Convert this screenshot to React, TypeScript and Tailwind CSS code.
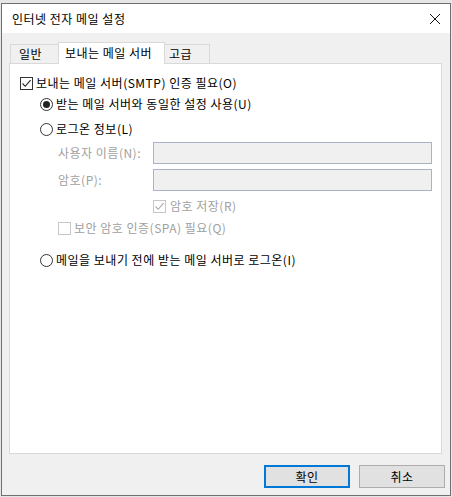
import React from "react";

const font = { fontFamily: '"Noto Sans CJK KR", "Noto Sans", sans-serif' };

function Check({ disabled }: { disabled?: boolean }) {
  return (
    <span className={`w-[13px] h-[13px] border shrink-0 flex items-center justify-center bg-white ${disabled ? "border-[#c6c6c6]" : "border-[#333333]"}`}>
      <svg width="11" height="11" viewBox="0 0 11 11" fill="none" stroke={disabled ? "#a8a8a8" : "#222"} strokeWidth="1.1">
        <path d="M1.5 5.5 L4.2 8.3 L9.6 2.2" />
      </svg>
    </span>
  );
}

function EmptyCheck() {
  return <span className="w-[13px] h-[13px] border border-[#c6c6c6] bg-white shrink-0" />;
}

function Radio({ on }: { on?: boolean }) {
  return (
    <span className="w-[13px] h-[13px] rounded-full border border-[#333333] bg-white shrink-0 flex items-center justify-center">
      {on && <span className="w-[7px] h-[7px] rounded-full bg-[#222]" />}
    </span>
  );
}

export default function App() {
  return (
    <div className="w-[452px] h-[497px] bg-[#e6e6e6] pt-[3px] pl-[1px] pr-[1px] text-[12px] tracking-[0.5px] text-black" style={font}>
      <div className="w-[450px] h-[493px] border border-[#707070] bg-[#f0f0f0] flex flex-col">
        {/* title bar */}
        <div className="h-[29px] bg-white flex items-center justify-between pl-[10px] pr-[9px] shrink-0">
          <span className="text-[12px] leading-none">인터넷 전자 메일 설정</span>
          <svg width="12" height="12" viewBox="0 0 12 12" stroke="#111" strokeWidth="1">
            <path d="M1 1 L11 11 M11 1 L1 11" />
          </svg>
        </div>

        {/* tabs */}
        <div className="flex items-end pl-[8px] h-[30px] shrink-0">
          <div className="h-[19px] w-[49px] border border-b-0 border-[#d9d9d9] bg-[#f0f0f0] flex items-center pl-[8px] mr-[-1px]">일반</div>
          <div className="h-[22px] w-[107px] border border-b-0 border-[#d9d9d9] bg-white flex items-center pl-[6px] relative z-10 mb-[-1px] pb-[2px]">보내는 메일 서버</div>
          <div className="h-[19px] w-[45px] border border-b-0 border-l-0 border-[#d9d9d9] bg-[#f0f0f0] flex items-center pl-[4px]">고급</div>
        </div>

        {/* panel */}
        <div className="mx-[7px] w-[433px] h-[391px] border border-[#d9d9d9] bg-white shrink-0 flex flex-col">
          <div className="h-[20px] mt-[9px] pl-[10px] flex items-center gap-[3px]">
            <Check />
            <span>보내는 메일 서버(SMTP) 인증 필요(O)</span>
          </div>
          <div className="h-[20px] mt-[1px] pl-[30px] flex items-center gap-[3px]">
            <Radio on />
            <span>받는 메일 서버와 동일한 설정 사용(U)</span>
          </div>
          <div className="h-[20px] mt-[5px] pl-[30px] flex items-center gap-[3px]">
            <Radio />
            <span>로그온 정보(L)</span>
          </div>
          <div className="h-[22px] mt-[3px] pl-[48px] flex items-center text-[#a0a0a0]">
            <span className="w-[95px]">사용자 이름(N):</span>
            <div className="w-[279px] h-[22px] border border-[#a7b4c6] bg-[#f0f0f0]" />
          </div>
          <div className="h-[22px] mt-[5px] pl-[48px] flex items-center text-[#a0a0a0]">
            <span className="w-[95px]">암호(P):</span>
            <div className="w-[279px] h-[22px] border border-[#a7b4c6] bg-[#f0f0f0]" />
          </div>
          <div className="h-[20px] mt-[5px] pl-[143px] flex items-center gap-[4px] text-[#a0a0a0]">
            <Check disabled />
            <span>암호 저장(R)</span>
          </div>
          <div className="h-[20px] mt-[2px] pl-[48px] flex items-center gap-[3px] text-[#a0a0a0]">
            <EmptyCheck />
            <span>보안 암호 인증(SPA) 필요(Q)</span>
          </div>
          <div className="h-[20px] mt-[12px] pl-[30px] flex items-center gap-[3px]">
            <Radio />
            <span>메일을 보내기 전에 받는 메일 서버로 로그온(I)</span>
          </div>
        </div>

        {/* buttons */}
        <div className="flex justify-end gap-[9px] pr-[5px] mt-[11px]">
          <button className="w-[86px] h-[23px] border-2 border-[#0078d7] bg-[#e1e1e1] flex items-center justify-center text-[12px]">확인</button>
          <button className="w-[86px] h-[23px] border border-[#adadad] bg-[#e1e1e1] flex items-center justify-center text-[12px]">취소</button>
        </div>
      </div>
    </div>
  );
}
